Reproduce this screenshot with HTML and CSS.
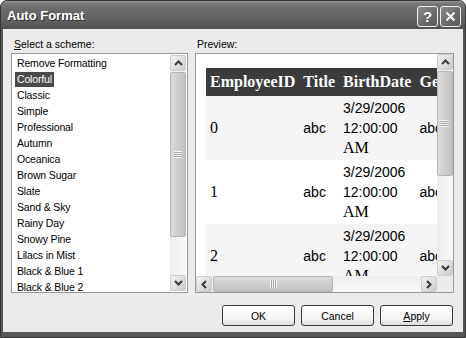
FILE: index.html
```html
<!DOCTYPE html>
<html lang="en">
<head>
    <meta charset="UTF-8">
    <title>Auto Format</title>
    <link rel="stylesheet" href="styles.css">
</head>
<body>
    <div class="window">
        <div class="titlebar">
            <span class="title">Auto Format</span>
            <div class="caption-buttons">
                <span class="cap-btn help">?</span>
                <span class="cap-btn close">
                    <svg width="11" height="11" viewBox="0 0 11 11"><path d="M1.5 1.5 L9.5 9.5 M9.5 1.5 L1.5 9.5" stroke="#fff" stroke-width="2" fill="none"/></svg>
                </span>
            </div>
        </div>

        <div class="client">
            <div class="panes">
                <div class="scheme-pane">
                    <div class="field-label"><u>S</u>elect a scheme:</div>
                    <div class="listbox">
                        <ul class="scheme-list">
                            <li><span>Remove Formatting</span></li>
                            <li><span class="selected">Colorful</span></li>
                            <li><span>Classic</span></li>
                            <li><span>Simple</span></li>
                            <li><span>Professional</span></li>
                            <li><span>Autumn</span></li>
                            <li><span>Oceanica</span></li>
                            <li><span>Brown Sugar</span></li>
                            <li><span>Slate</span></li>
                            <li><span>Sand &amp; Sky</span></li>
                            <li><span>Rainy Day</span></li>
                            <li><span>Snowy Pine</span></li>
                            <li><span>Lilacs in Mist</span></li>
                            <li><span>Black &amp; Blue 1</span></li>
                            <li><span>Black &amp; Blue 2</span></li>
                        </ul>
                        <div class="vscroll">
                            <div class="sb-btn"><svg width="9" height="6" viewBox="0 0 9 6"><polyline points="1,5 4.5,1.5 8,5" /></svg></div>
                            <div class="thumb list-thumb"><div class="grip"></div></div>
                            <div class="track"></div>
                            <div class="sb-btn"><svg width="9" height="6" viewBox="0 0 9 6"><polyline points="1,1 4.5,4.5 8,1" /></svg></div>
                        </div>
                    </div>
                </div>

                <div class="preview-pane">
                    <div class="field-label preview-label">Preview:</div>
                    <div class="preview-box">
                        <div class="viewport">
                            <table class="grid">
                                <tr>
                                    <th>EmployeeID</th>
                                    <th>Title</th>
                                    <th>BirthDate</th>
                                    <th>Gender</th>
                                </tr>
                                <tr class="alt">
                                    <td>0</td>
                                    <td class="sans">abc</td>
                                    <td><span class="sans">3/29/2006<br>12:00:00</span><br>AM</td>
                                    <td class="sans">abc</td>
                                </tr>
                                <tr>
                                    <td>1</td>
                                    <td class="sans">abc</td>
                                    <td><span class="sans">3/29/2006<br>12:00:00</span><br>AM</td>
                                    <td class="sans">abc</td>
                                </tr>
                                <tr class="alt">
                                    <td>2</td>
                                    <td class="sans">abc</td>
                                    <td><span class="sans">3/29/2006<br>12:00:00</span><br>AM</td>
                                    <td class="sans">abc</td>
                                </tr>
                            </table>
                        </div>
                        <div class="vscroll">
                            <div class="sb-btn"><svg width="9" height="6" viewBox="0 0 9 6"><polyline points="1,5 4.5,1.5 8,5" /></svg></div>
                            <div class="thumb preview-thumb"><div class="grip"></div></div>
                            <div class="track"></div>
                            <div class="sb-btn"><svg width="9" height="6" viewBox="0 0 9 6"><polyline points="1,1 4.5,4.5 8,1" /></svg></div>
                        </div>
                        <div class="hscroll">
                            <div class="sb-btn"><svg width="6" height="9" viewBox="0 0 6 9"><polyline points="5,1 1.5,4.5 5,8" /></svg></div>
                            <div class="thumb h-thumb"><div class="grip"></div></div>
                            <div class="track"></div>
                            <div class="sb-btn"><svg width="6" height="9" viewBox="0 0 6 9"><polyline points="1,1 4.5,4.5 1,8" /></svg></div>
                        </div>
                        <div class="corner"></div>
                    </div>
                </div>
            </div>

            <div class="dialog-buttons">
                <button>OK</button>
                <button>Cancel</button>
                <button><u>A</u>pply</button>
            </div>
        </div>
    </div>
</body>
</html>
```

FILE: styles.css
```css
* {
    margin: 0;
    padding: 0;
    box-sizing: border-box;
}

body {
    width: 466px;
    height: 338px;
    overflow: hidden;
    background-color: #ffffff;
    font-family: 'Liberation Sans', Arial, sans-serif;
    font-size: 10.5px;
    color: #000;
}

.window {
    width: 466px;
    height: 338px;
    display: flex;
    flex-direction: column;
    background-color: #575757;
    border: 1px solid #353535;
    border-radius: 7px 7px 0 0;
    overflow: hidden;
}

/* title bar */
.titlebar {
    height: 28px;
    display: flex;
    align-items: center;
    justify-content: space-between;
    padding: 0 4px 0 6px;
    background: linear-gradient(#9a9a9a 0, #7a7a7a 2px, #6a6a6a 8px, #626262 18px, #555555 26px, #4e4e4e);
}

.title {
    color: #fff;
    font-weight: bold;
    font-size: 13px;
    text-shadow: 1px 1px 0 #2e2e2e;
}

.caption-buttons {
    display: flex;
    gap: 2px;
    margin-top: 2px;
}

.cap-btn {
    width: 21px;
    height: 21px;
    border: 1px solid #efefef;
    border-radius: 3px;
    background: linear-gradient(135deg, #8e8e8e, #6a6a6a 55%, #5a5a5a);
    display: flex;
    align-items: center;
    justify-content: center;
    color: #fff;
    font-weight: bold;
    font-size: 15px;
}

/* client area */
.client {
    flex: 1;
    margin: 0 2px 5px;
    padding: 8px 9px 0 8px;
    background-color: #ebebeb;
}

.panes {
    display: flex;
    gap: 7px;
}

.scheme-pane {
    width: 177px;
}

.preview-pane {
    flex: 1;
}

.field-label {
    height: 15px;
    line-height: 15px;
    margin: 0 0 1px 3px;
}

.preview-label {
    margin-left: 2px;
}

.listbox {
    height: 240px;
    display: flex;
    background-color: #fff;
    border: 1px solid #9a9a9a;
}

.scheme-list {
    flex: 1;
    list-style: none;
    padding: 1px 0 0 3px;
    letter-spacing: -0.15px;
}

.scheme-list li {
    height: 16px;
    line-height: 16px;
}

.scheme-list span {
    display: inline-block;
    height: 15px;
    line-height: 15px;
    padding: 0 2px;
    margin-top: 1px;
}

.scheme-list .selected {
    background-color: #4a4a4a;
    color: #fff;
}

/* scrollbars */
.vscroll {
    width: 16px;
    display: flex;
    flex-direction: column;
    background: linear-gradient(to right, #eeeeee, #f8f8f8);
}

.listbox .vscroll {
    margin: 1px 1px 1px 0;
}

.hscroll {
    height: 16px;
    display: flex;
    background: linear-gradient(#eeeeee, #f8f8f8);
}

.sb-btn {
    width: 16px;
    height: 16px;
    flex-shrink: 0;
    display: flex;
    align-items: center;
    justify-content: center;
    border: 1px solid #cdcdcd;
    border-radius: 2px;
    background: linear-gradient(135deg, #f2f2f2, #d8d8d8 70%, #cbcbcb);
}

.sb-btn polyline {
    fill: none;
    stroke: #3a3a3a;
    stroke-width: 2;
}

.thumb {
    display: flex;
    align-items: center;
    justify-content: center;
    border: 1px solid #b5b5b5;
    border-radius: 2px;
    background: linear-gradient(to right, #dcdcdc, #cdcdcd 50%, #c2c2c2);
}

.list-thumb {
    height: 165px;
    margin-top: 1px;
}

.preview-thumb {
    height: 105px;
    margin-top: 1px;
}

.h-thumb {
    width: 120px;
    margin-left: 1px;
    background: linear-gradient(#dcdcdc, #cdcdcd 50%, #c2c2c2);
}

.vscroll .grip {
    width: 8px;
    height: 7px;
    background: repeating-linear-gradient(#f6f6f6 0 1px, #a6a6a6 1px 2px);
}

.hscroll .grip {
    width: 7px;
    height: 8px;
    background: repeating-linear-gradient(to right, #f6f6f6 0 1px, #a6a6a6 1px 2px);
}

.track {
    flex: 1;
}

/* preview */
.preview-box {
    height: 240px;
    display: grid;
    grid-template-columns: 1fr 16px;
    grid-template-rows: 1fr 16px;
    background-color: #fff;
    border: 1px solid #9a9a9a;
}

.viewport {
    overflow: hidden;
    padding: 14px 0 0 10px;
}

.corner {
    background-color: #ebebeb;
}

.grid {
    border-collapse: collapse;
    font-family: 'Liberation Serif', 'Times New Roman', serif;
    font-size: 16px;
}

.grid th {
    height: 28px;
    padding: 0 4px;
    background-color: #3b3b3b;
    color: #fff;
    text-align: left;
    white-space: nowrap;
}

.grid td {
    height: 64px;
    padding: 2px 4px;
    line-height: 20px;
    vertical-align: middle;
    white-space: nowrap;
}

.grid tr.alt td {
    background-color: #f5f5f5;
}

.grid .sans {
    font-family: 'Liberation Sans', Arial, sans-serif;
    font-size: 14px;
}

/* buttons */
.dialog-buttons {
    display: flex;
    justify-content: flex-end;
    gap: 6px;
    margin-top: 12px;
    padding-right: 1px;
}

.dialog-buttons button {
    width: 73px;
    height: 21px;
    border: 1px solid #3a3a3a;
    border-radius: 3px;
    background: linear-gradient(#ffffff, #f3f3f3 70%, #dcdcdc);
    font-family: 'Liberation Sans', Arial, sans-serif;
    font-size: 10.5px;
    color: #000;
}
```
